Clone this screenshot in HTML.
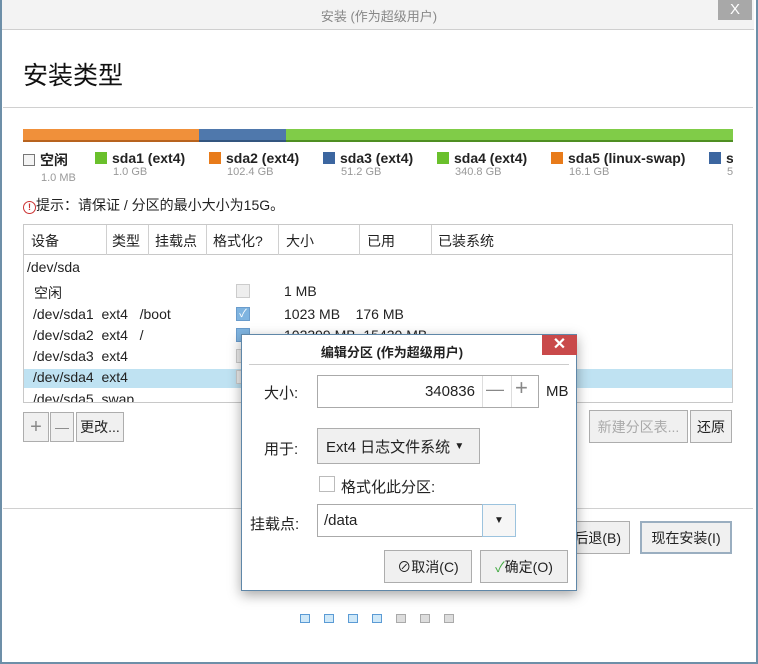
<!DOCTYPE html>
<html><head><meta charset="utf-8"><style>
*{box-sizing:border-box;margin:0;padding:0}
body{width:758px;height:664px;overflow:hidden;background:#fff;font-family:"Liberation Sans","Noto Sans CJK SC",sans-serif;font-size:14px;color:#222;position:relative}
.a{position:absolute;white-space:nowrap}
.btn{position:absolute;border:1px solid #adadad;background:#f0f0f0;display:flex;align-items:center;justify-content:center;font-size:14px}
.chk{position:absolute;width:14px;height:14px;border:1px solid #ccc;background:#eee}
.sw{display:inline-block;width:12px;height:12px;margin-right:5px;vertical-align:-1px}
</style></head><body>
<div class="a" style="left:0;top:0;width:758px;height:664px;border:2px solid #6d8fa8;border-top:none"></div>
<div class="a" style="left:2px;top:0;width:752px;height:30px;background:#f3f3f3;border-bottom:1px solid #cfcfcf"></div>
<div class="a" style="left:0;top:6px;width:758px;text-align:center;color:#888;font-size:13px">安装 (作为超级用户)</div>
<div class="a" style="left:718px;top:0;width:34px;height:20px;background:#a8a8a8;color:#fff;font-size:15px;text-align:center;line-height:20px">X</div>
<div class="a" style="left:23px;top:56px;font-size:25px;color:#111">安装类型</div>
<div class="a" style="left:3px;top:107px;width:750px;height:402px;border-top:1px solid #d0d0d0;border-bottom:1px solid #d0d0d0"></div>
<div class="a" style="left:23px;top:129px;width:176px;height:13px;background:#f0903a;border-bottom:2px solid #b8631e"></div>
<div class="a" style="left:199px;top:129px;width:87px;height:13px;background:#4f78ac;border-bottom:2px solid #33557f"></div>
<div class="a" style="left:286px;top:129px;width:447px;height:13px;background:#80cc48;border-bottom:2px solid #4f8f22"></div>
<div class="a" style="left:23px;top:150px;font-size:14px;font-weight:bold"><span class="sw" style="background:#f4f4f4;border:1px solid #777"></span>空闲</div>
<div class="a" style="left:41px;top:172px;font-size:11px;color:#999">1.0 MB</div>
<div class="a" style="left:95px;top:150px;font-weight:bold"><span class="sw" style="background:#6ac02c"></span>sda1 (ext4)</div>
<div class="a" style="left:113px;top:166px;font-size:11px;color:#999">1.0 GB</div>
<div class="a" style="left:209px;top:150px;font-weight:bold"><span class="sw" style="background:#e87b1a"></span>sda2 (ext4)</div>
<div class="a" style="left:227px;top:166px;font-size:11px;color:#999">102.4 GB</div>
<div class="a" style="left:323px;top:150px;font-weight:bold"><span class="sw" style="background:#3c66a0"></span>sda3 (ext4)</div>
<div class="a" style="left:341px;top:166px;font-size:11px;color:#999">51.2 GB</div>
<div class="a" style="left:437px;top:150px;font-weight:bold"><span class="sw" style="background:#6ac02c"></span>sda4 (ext4)</div>
<div class="a" style="left:455px;top:166px;font-size:11px;color:#999">340.8 GB</div>
<div class="a" style="left:551px;top:150px;font-weight:bold"><span class="sw" style="background:#e87b1a"></span>sda5 (linux-swap)</div>
<div class="a" style="left:569px;top:166px;font-size:11px;color:#999">16.1 GB</div>
<div class="a" style="left:709px;top:150px;width:24px;overflow:hidden;font-weight:bold"><span class="sw" style="background:#3c66a0"></span>s</div>
<div class="a" style="left:727px;top:166px;font-size:11px;color:#999;width:6px;overflow:hidden">5</div>
<div class="a" style="left:23px;top:195px;font-size:14px"><span style="display:inline-block;width:13px;height:13px;border:1px solid #c33;border-radius:50%;font-size:9px;text-align:center;line-height:11px;color:#c33;font-weight:bold;vertical-align:0">!</span>提示：请保证 / 分区的最小大小为15G。</div>
<div class="a" style="left:23px;top:224px;width:710px;height:179px;border:1px solid #c8c8c8;overflow:hidden">
 <div class="a" style="left:0;top:0;width:710px;height:30px;border-bottom:1px solid #c8c8c8;background:#fff"></div>
 <div class="a" style="left:82px;top:0;height:30px;border-left:1px solid #d0d0d0"></div>
 <div class="a" style="left:124px;top:0;height:30px;border-left:1px solid #d0d0d0"></div>
 <div class="a" style="left:182px;top:0;height:30px;border-left:1px solid #d0d0d0"></div>
 <div class="a" style="left:254px;top:0;height:30px;border-left:1px solid #d0d0d0"></div>
 <div class="a" style="left:335px;top:0;height:30px;border-left:1px solid #d0d0d0"></div>
 <div class="a" style="left:407px;top:0;height:30px;border-left:1px solid #d0d0d0"></div>
 <div class="a" style="left:7px;top:6px">设备</div><div class="a" style="left:88px;top:6px">类型</div><div class="a" style="left:131px;top:6px">挂载点</div><div class="a" style="left:189px;top:6px">格式化?</div><div class="a" style="left:262px;top:6px">大小</div><div class="a" style="left:343px;top:6px">已用</div><div class="a" style="left:414px;top:6px">已装系统</div>
 <div class="a" style="left:0;top:144px;width:710px;height:19px;background:#bfe2f2"></div>
 <div class="a" style="left:3px;top:34px">/dev/sda</div>
 <div class="a" style="left:10px;top:58px">空闲</div><div class="chk" style="left:212px;top:59px"></div><div class="a" style="left:260px;top:58px">1 MB</div>
 <div class="a" style="left:9px;top:81px">/dev/sda1&nbsp; ext4&nbsp;&nbsp; /boot</div><div class="chk" style="left:212px;top:82px;background:#7fb4e0;border-color:#6a9ccc;color:#fff;font-size:11px;line-height:12px;text-align:center">✓</div><div class="a" style="left:260px;top:81px">1023 MB&nbsp;&nbsp;&nbsp; 176 MB</div>
 <div class="a" style="left:9px;top:102px">/dev/sda2&nbsp; ext4&nbsp;&nbsp; /</div><div class="chk" style="left:212px;top:103px;background:#7fb4e0;border-color:#6a9ccc"></div><div class="a" style="left:260px;top:102px">102399 MB&nbsp; 15430 MB</div>
 <div class="a" style="left:9px;top:123px">/dev/sda3&nbsp; ext4</div><div class="chk" style="left:212px;top:124px"></div>
 <div class="a" style="left:9px;top:144px">/dev/sda4&nbsp; ext4</div><div class="chk" style="left:212px;top:145px"></div>
 <div class="a" style="left:9px;top:166px">/dev/sda5&nbsp; swap</div>
</div>
<div class="btn" style="left:23px;top:412px;width:26px;height:30px;color:#888;font-size:20px;font-weight:200">+</div>
<div class="btn" style="left:50px;top:412px;width:24px;height:30px;color:#888">—</div>
<div class="btn" style="left:76px;top:412px;width:48px;height:30px">更改...</div>
<div class="btn" style="left:589px;top:410px;width:99px;height:33px;color:#aaa">新建分区表...</div>
<div class="btn" style="left:690px;top:410px;width:42px;height:33px">还原</div>
<div class="btn" style="left:560px;top:521px;width:70px;height:33px;justify-content:flex-end;padding-right:8px">后退(B)</div>
<div class="btn" style="left:640px;top:521px;width:92px;height:33px;border:2px solid #9aaec0">现在安装(I)</div>
<div class="a" style="left:300px;top:614px;width:10px;height:9px;border:1px solid #5b9bd5;background:#cfe8f8"></div>
<div class="a" style="left:324px;top:614px;width:10px;height:9px;border:1px solid #5b9bd5;background:#cfe8f8"></div>
<div class="a" style="left:348px;top:614px;width:10px;height:9px;border:1px solid #5b9bd5;background:#cfe8f8"></div>
<div class="a" style="left:372px;top:614px;width:10px;height:9px;border:1px solid #5b9bd5;background:#cfe8f8"></div>
<div class="a" style="left:396px;top:614px;width:10px;height:9px;border:1px solid #aaa;background:#ddd"></div>
<div class="a" style="left:420px;top:614px;width:10px;height:9px;border:1px solid #aaa;background:#ddd"></div>
<div class="a" style="left:444px;top:614px;width:10px;height:9px;border:1px solid #aaa;background:#ddd"></div>
<!-- dialog -->
<div class="a" style="left:241px;top:334px;width:336px;height:257px;background:#fff;border:1px solid #5f87a8;box-shadow:0 4px 12px rgba(0,0,0,.35)">
 <div class="a" style="left:7px;top:29px;width:320px;border-top:1px solid #ccc"></div>
 <div class="a" style="left:0;top:7px;width:300px;text-align:center;font-size:13px;font-weight:bold">编辑分区 (作为超级用户)</div>
 <div class="a" style="left:300px;top:0;width:35px;height:20px;background:#c9494a;color:#fff;text-align:center;font-size:16px;line-height:19px;font-weight:bold">✕</div>
 <div class="a" style="left:22px;top:47px;font-size:15px">大小:</div>
 <div class="a" style="left:75px;top:40px;width:222px;height:33px;border:1px solid #aaa;background:#fff"></div>
 <div class="a" style="left:165px;top:48px;width:68px;text-align:right;font-size:15px">340836</div>
 <div class="a" style="left:240px;top:41px;height:31px;border-left:1px solid #ddd"></div>
 <div class="a" style="left:269px;top:41px;height:31px;border-left:1px solid #ddd"></div>
 <div class="a" style="left:244px;top:44px;color:#888;font-size:18px">—</div>
 <div class="a" style="left:273px;top:40px;color:#888;font-size:22px;font-weight:200">+</div>
 <div class="a" style="left:304px;top:48px;font-size:15px">MB</div>
 <div class="a" style="left:22px;top:103px;font-size:15px">用于:</div>
 <div class="btn" style="left:75px;top:93px;width:163px;height:36px;justify-content:flex-start;padding-left:8px;font-size:15px">Ext4 日志文件系统&nbsp; <span style="font-size:10px">▼</span></div>
 <div class="a" style="left:77px;top:141px;width:16px;height:16px;border:1px solid #bbb;background:#fff"></div>
 <div class="a" style="left:99px;top:141px;font-size:15px">格式化此分区:</div>
 <div class="a" style="left:8px;top:178px;font-size:15px">挂载点:</div>
 <div class="a" style="left:75px;top:169px;width:199px;height:33px;border:1px solid #aaa;background:#fff"></div>
 <div class="a" style="left:240px;top:169px;width:34px;height:33px;background:#f6f6f6;border:1px solid #9cc3de;text-align:center;font-size:10px;line-height:31px">▼</div>
 <div class="a" style="left:82px;top:177px;font-size:15px">/data</div>
 <div class="btn" style="left:142px;top:215px;width:88px;height:33px">⊘取消(C)</div>
 <div class="btn" style="left:238px;top:215px;width:88px;height:33px"><span style="color:#4a4">✓</span>确定(O)</div>
</div>
</body></html>
